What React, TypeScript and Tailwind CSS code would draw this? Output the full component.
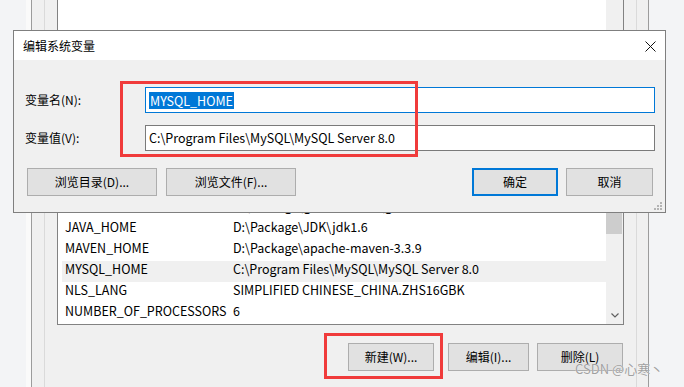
const rows: [string, string][] = [
  ['', ''],
  ['', ''],
  ['', ''],
  ['', ''],
  ['', ''],
  ['', ''],
  ['', ''],
  ['GRADLE_HOME', 'D:\\Package\\gradle-4.10.2\\gradle'],
  ['JAVA_HOME', 'D:\\Package\\JDK\\jdk1.6'],
  ['MAVEN_HOME', 'D:\\Package\\apache-maven-3.3.9'],
  ['MYSQL_HOME', 'C:\\Program Files\\MySQL\\MySQL Server 8.0'],
  ['NLS_LANG', 'SIMPLIFIED CHINESE_CHINA.ZHS16GBK'],
  ['NUMBER_OF_PROCESSORS', '6'],
]

const WinButton = ({ label, w }: { label: string; w: string }) => (
  <button type="button" className={`${w} h-[28px] border border-[#adadad] bg-[#e1e1e1] text-[12px] leading-none`}>
    {label}
  </button>
)

const Dialog = () => (
  <div className="absolute left-[13px] top-[30px] w-[653px] h-[183px] border border-[#7f7f7f] bg-[#f0f0f0] flex flex-col">
    <div className="h-[29px] bg-white flex items-center justify-between pl-[9px] pr-[9px]">
      <span className="text-[12px] leading-none">编辑系统变量</span>
      <svg width="11" height="11" viewBox="0 0 11 11" className="mt-[1px]">
        <path d="M0.5 0.5L10.5 10.5M10.5 0.5L0.5 10.5" stroke="#111" strokeWidth="1" fill="none" />
      </svg>
    </div>
    <div className="flex-1 flex flex-col pl-[11px] pr-[10px] pt-[27px]">
      <div className="flex items-center">
        <span className="w-[120px] text-[12px]">变量名(N):</span>
        <div className="flex-1 h-[26px] border border-[#0078d7] bg-white flex items-center pl-[3px]">
          <span className="h-[17px] leading-[17px] bg-[#0078d7] text-white text-[12.5px] px-[1px]">MYSQL_HOME</span>
        </div>
      </div>
      <div className="flex items-center mt-[12px]">
        <span className="w-[120px] text-[12px]">变量值(V):</span>
        <div className="flex-1 h-[26px] border border-[#7a7a7a] bg-white flex items-center pl-[3px] text-[12.5px]">
          C:\Program Files\MySQL\MySQL Server 8.0
        </div>
      </div>
      <div className="flex mt-[17px] pl-[2px] pr-[2px]">
        <WinButton label="浏览目录(D)..." w="w-[130px]" />
        <div className="w-[9px]" />
        <WinButton label="浏览文件(F)..." w="w-[130px]" />
        <div className="flex-1" />
        <button type="button" className="w-[86px] h-[28px] border-2 border-[#0078d7] bg-[#e1e1e1] text-[12px] leading-none">确定</button>
        <div className="w-[8px]" />
        <WinButton label="取消" w="w-[87px]" />
      </div>
    </div>
    <svg width="8" height="8" viewBox="0 0 8 8" className="absolute right-[3px] bottom-[2px]">
      <rect x="6" y="0" width="2" height="2" fill="#b4b4b4" />
      <rect x="3" y="3" width="2" height="2" fill="#b4b4b4" />
      <rect x="6" y="3" width="2" height="2" fill="#b4b4b4" />
      <rect x="0" y="6" width="2" height="2" fill="#b4b4b4" />
      <rect x="3" y="6" width="2" height="2" fill="#b4b4b4" />
      <rect x="6" y="6" width="2" height="2" fill="#b4b4b4" />
    </svg>
  </div>
)

export default function App() {
  return (
    <div className="relative w-[684px] h-[387px] overflow-hidden bg-[#f3f4f6] flex text-black font-['Microsoft_YaHei','Noto_Sans_CJK_SC',sans-serif]">
      <div className="w-[26px] shrink-0" />
      <div className="w-[5px] shrink-0 bg-[#fafafa]" />
      <div className="w-[618px] shrink-0 border-x border-[#9c9c9c] bg-[#f0f0f0] pl-[12px] pr-[11px]">
        <div className="h-full border-x border-[#dadada] px-[12px] flex flex-col">
          <div className="h-[325px] shrink-0 border-x border-b border-[#828282] bg-white flex overflow-hidden">
            <div className="flex-1 flex flex-col justify-end pl-[4px]">
              {rows.map(([k, v], i) => (
                <div key={i} className={`h-[21px] shrink-0 flex items-center pl-[3px] pb-[4px] text-[12.5px] ${k === 'MYSQL_HOME' ? 'bg-[#f0f0f0]' : ''}`}>
                  <span className="w-[168px] shrink-0">{k}</span>
                  <span>{v}</span>
                </div>
              ))}
            </div>
            <div className="w-[17px] shrink-0 bg-[#f0f0f0] flex flex-col">
              <div className="mt-[140px] h-[94px] bg-[#cdcdcd] mr-[1px]" />
              <div className="flex-1" />
              <div className="h-[17px] flex items-center justify-center">
                <svg width="8" height="5" viewBox="0 0 8 5">
                  <path d="M0.5 0.5L4 4L7.5 0.5" stroke="#606060" strokeWidth="1.2" fill="none" />
                </svg>
              </div>
            </div>
          </div>
          <div className="flex justify-end mt-[18px] pr-[1px]">
            <WinButton label="新建(W)..." w="w-[86px]" />
            <div className="w-[14px]" />
            <WinButton label="编辑(I)..." w="w-[81px]" />
            <div className="w-[8px]" />
            <WinButton label="删除(L)" w="w-[86px]" />
          </div>
        </div>
      </div>
      <Dialog />
      <div className="absolute left-[120px] top-[81px] w-[298px] h-[76px] border-[3px] border-[#f03b3b]" />
      <div className="absolute left-[324px] top-[333px] w-[119px] h-[46px] border-[3px] border-[#f03b3b]" />
      <div className="absolute left-[575px] top-[359px] text-[13px] leading-[19px] text-[#a0a0a0] [text-shadow:0_0_1px_#fff]">CSDN @心寒丶</div>
    </div>
  )
}
